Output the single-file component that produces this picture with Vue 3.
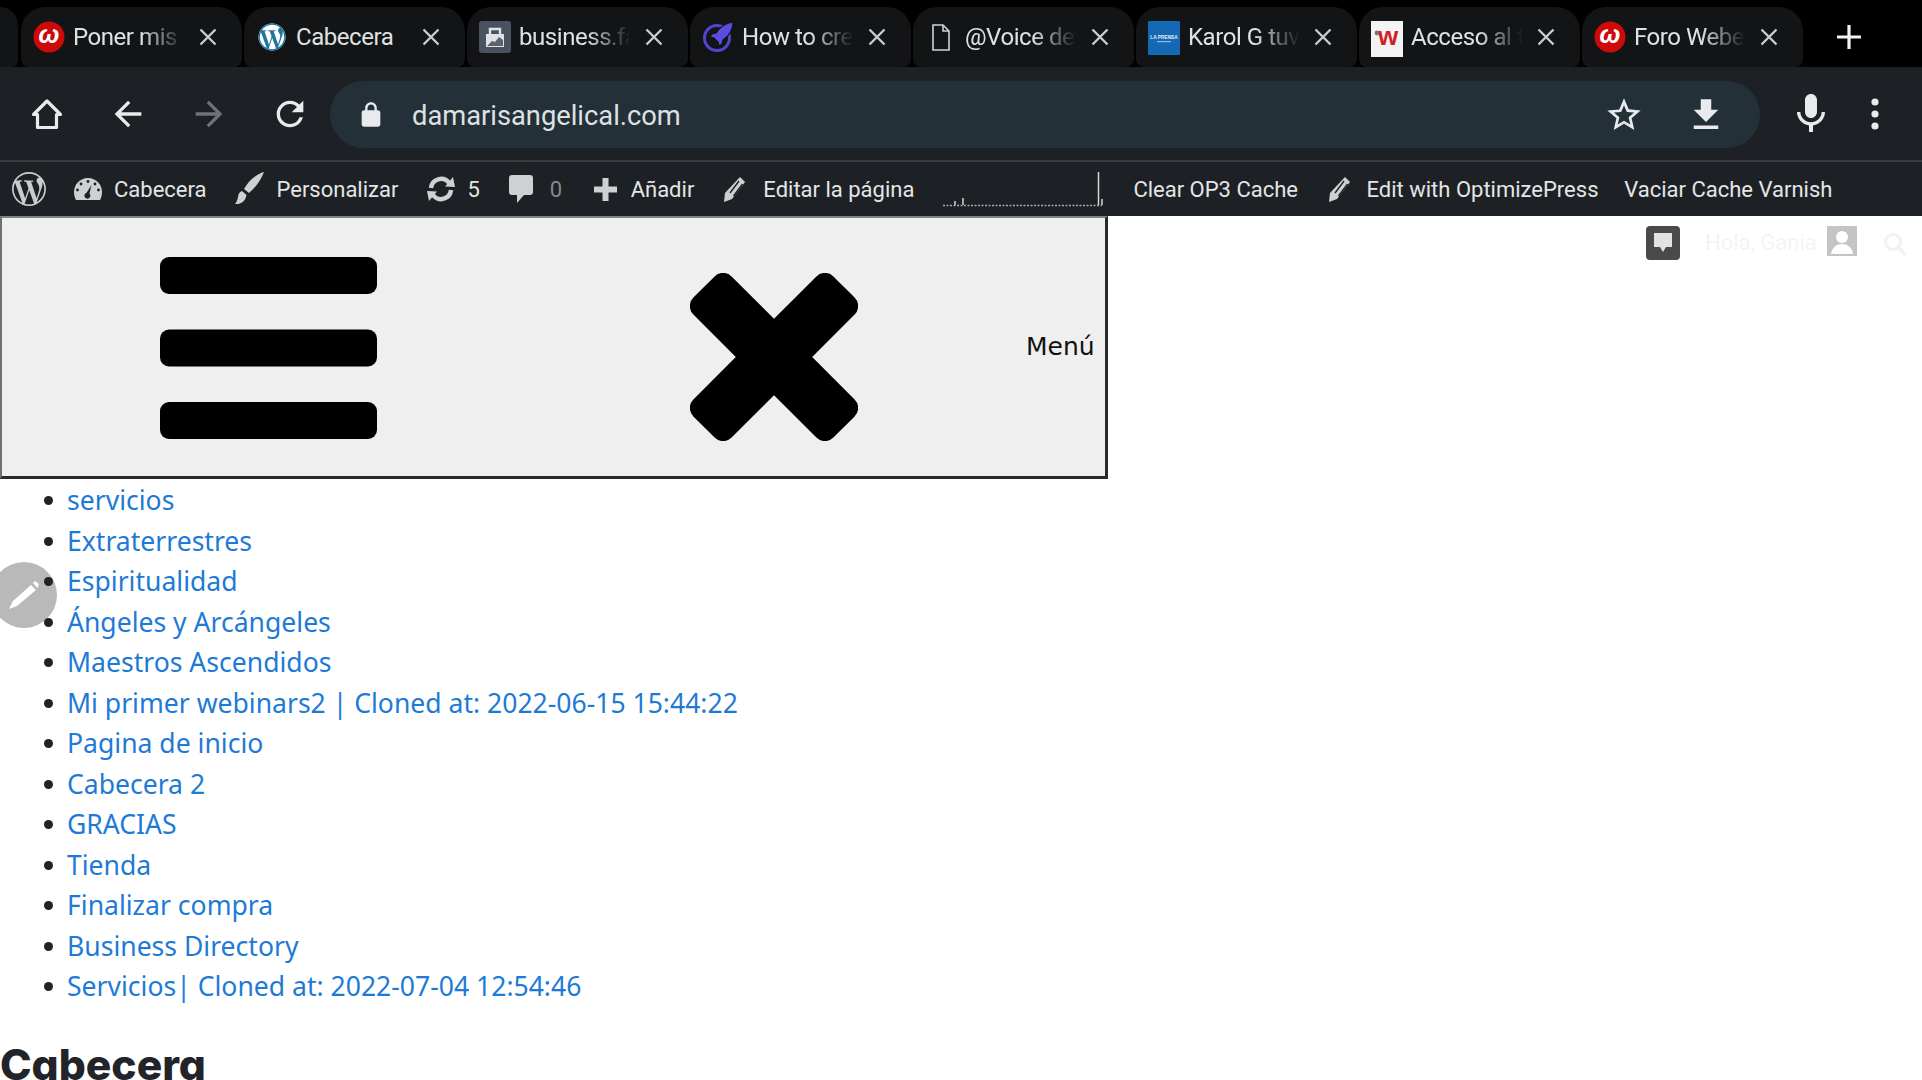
<script setup>
const wp = 'M21.469 6.825c.84 1.537 1.318 3.3 1.318 5.175 0 3.979-2.156 7.456-5.363 9.325l3.295-9.527c.615-1.54.82-2.771.82-3.864 0-.405-.026-.78-.07-1.11m-7.981.105c.647-.03 1.232-.105 1.232-.105.582-.075.514-.93-.067-.899 0 0-1.755.135-2.88.135-1.064 0-2.85-.15-2.85-.15-.585-.03-.661.855-.075.885 0 0 .54.061 1.125.09l1.68 4.605-2.37 7.08L5.354 6.9c.649-.03 1.234-.1 1.234-.1.585-.075.516-.93-.065-.896 0 0-1.746.138-2.874.138-.2 0-.438-.008-.69-.015C4.911 3.15 8.235 1.215 12 1.215c2.809 0 5.365 1.072 7.286 2.833-.046-.003-.091-.009-.141-.009-1.06 0-1.812.923-1.812 1.914 0 .89.513 1.643 1.06 2.531.411.72.89 1.643.89 2.977 0 .915-.354 1.994-.821 3.479l-1.075 3.585-3.9-11.61.001.014zM12 22.784c-1.059 0-2.081-.153-3.048-.437l3.237-9.406 3.315 9.087c.024.053.05.101.078.149-1.12.393-2.325.609-3.582.609M1.211 12c0-1.564.336-3.05.935-4.39L7.29 21.709C3.694 19.96 1.212 16.271 1.211 12M12 0C5.385 0 0 5.385 0 12s5.385 12 12 12 12-5.385 12-12S18.615 0 12 0'
const tabs = [
  { kind: 'w', title: 'Poner mis p' },
  { kind: 'wp', title: 'Cabecera' },
  { kind: 'bag', title: 'business.fa' },
  { kind: 'rocket', title: 'How to cre' },
  { kind: 'doc', title: '@Voice det' },
  { kind: 'prensa', title: 'Karol G tuv' },
  { kind: 'acceso', title: 'Acceso al f' },
  { kind: 'w', title: 'Foro Weber' },
]
const links = [
  'servicios', 'Extraterrestres', 'Espiritualidad', 'Ángeles y Arcángeles', 'Maestros Ascendidos',
  'Mi primer webinars2 | Cloned at: 2022-06-15 15:44:22', 'Pagina de inicio', 'Cabecera 2', 'GRACIAS',
  'Tienda', 'Finalizar compra', 'Business Directory', 'Servicios| Cloned at: 2022-07-04 12:54:46',
]
</script>

<template>
  <div class="screen">
    <div class="strip">
      <div class="tab stub"></div>
      <div v-for="t in tabs" :key="t.title" class="tab" :class="{ plain: t.title === 'Cabecera' }">
        <svg class="fav" viewBox="0 0 32 32">
          <template v-if="t.kind === 'w'">
            <circle cx="16" cy="16" r="15.5" fill="#cc0a0a" />
            <text x="16" y="22" text-anchor="middle" class="fav-w" fill="#fff">ω</text>
          </template>
          <template v-else-if="t.kind === 'wp'">
            <circle cx="16" cy="16" r="13.5" fill="#fff" />
            <path :d="wp" fill="#21759b" transform="translate(2.500 2.500) scale(1.125)" />
          </template>
          <template v-else-if="t.kind === 'bag'">
            <rect width="32" height="32" rx="3" fill="#4b525f" />
            <path d="M7 13h18v13H7z" fill="#dfe1e4" />
            <path d="M11 13V8h10v5" fill="none" stroke="#dfe1e4" stroke-width="2.400" />
            <path d="M8 25l5-5 3 1 4-5 4 3v6z" fill="#5c6270" />
          </template>
          <template v-else-if="t.kind === 'rocket'">
            <circle cx="15" cy="17" r="12.500" fill="none" stroke="#5145cf" stroke-width="3" />
            <path d="M31 1c-7 1-13 5-17 11l-4 1-2 3 4 1 4 4 1 4 3-2 1-4c6-4 10-11 10-18z" fill="#5a4ee0" stroke="#111315" stroke-width="1.200" />
          </template>
          <template v-else-if="t.kind === 'doc'">
            <path d="M8 4h10l6 6v19H8zM18 4v6h6" fill="none" stroke="#cfd1d3" stroke-width="1.600" />
          </template>
          <template v-else-if="t.kind === 'prensa'">
            <rect width="32" height="34" fill="#1569b4" />
            <text x="16" y="18" text-anchor="middle" class="fav-p" fill="#e6eff7">LA PRENSA</text>
            <rect x="9" y="20" width="14" height="1.200" fill="#8fbbe0" />
          </template>
          <template v-else>
            <rect width="32" height="36" fill="#f4f4f4" />
            <text x="17" y="24" text-anchor="middle" class="fav-a" fill="#d21f1f">w</text>
            <circle cx="6" cy="12" r="2.400" fill="#777" />
          </template>
        </svg>
        <span class="tab-title">{{ t.title }}</span>
        <svg class="tab-x" viewBox="0 0 18 18"><path d="M1.500 1.500l15 15M16.500 1.500l-15 15" stroke="#c9cbce" stroke-width="2.400" /></svg>
      </div>
      <svg class="newtab" viewBox="0 0 24 24"><path d="M12 0v24M0 12h24" stroke="#f1f3f4" stroke-width="3.200" /></svg>
    </div>

    <div class="toolbar">
      <button class="navbtn">
        <svg width="36" height="36" viewBox="0 0 36 36"><path d="M18 5L4.500 18.500H8.500V31.500H27.500V18.500H31.500Z" fill="none" stroke="#e8eaed" stroke-width="3.200" stroke-linejoin="round" /></svg>
      </button>
      <button class="navbtn">
        <svg width="40" height="40" viewBox="0 0 24 24"><path fill="#e8eaed" d="M20 11H7.830l5.590-5.590L12 4l-8 8 8 8 1.410-1.410L7.830 13H20v-2z" /></svg>
      </button>
      <button class="navbtn">
        <svg width="40" height="40" viewBox="0 0 24 24"><path fill="#6f7276" d="M4 11h12.170l-5.590-5.590L12 4l8 8-8 8-1.410-1.410L16.170 13H4v-2z" /></svg>
      </button>
      <button class="navbtn">
        <svg width="40" height="40" viewBox="0 0 24 24"><path fill="#e8eaed" d="M17.650 6.350A7.958 7.958 0 0 0 12 4c-4.420 0-7.990 3.580-7.990 8s3.570 8 7.990 8c3.730 0 6.840-2.550 7.730-6h-2.080A5.990 5.990 0 0 1 12 18c-3.310 0-6-2.690-6-6s2.690-6 6-6c1.660 0 3.140.690 4.220 1.780L13 11h7V4l-2.350 2.350z" /></svg>
      </button>
      <div class="urlbar">
        <svg class="lock" width="28" height="28" viewBox="0 0 24 24"><path fill="#e8eaed" d="M18 8h-1V6c0-2.760-2.240-5-5-5S7 3.240 7 6v2H6c-1.100 0-2 .9-2 2v10c0 1.100.9 2 2 2h12c1.100 0 2-.9 2-2V10c0-1.100-.9-2-2-2zM9 6c0-1.660 1.340-3 3-3s3 1.340 3 3v2H9V6z" /></svg>
        <span class="url">damarisangelical.com</span>
        <svg class="star" width="40" height="40" viewBox="0 0 24 24"><path fill="#e8eaed" d="M22 9.240l-7.190-.62L12 2 9.190 8.630 2 9.240l5.460 4.730L5.820 21 12 17.270 18.180 21l-1.630-7.030L22 9.240zM12 15.400l-3.760 2.270 1-4.280-3.320-2.880 4.380-.38L12 6.100l1.710 4.040 4.380.38-3.320 2.880 1 4.280L12 15.400z" /></svg>
        <svg class="down" width="42" height="42" viewBox="0 0 24 24"><path fill="#e8eaed" d="M19 9h-4V3H9v6H5l7 7 7-7zM5 18v2h14v-2H5z" /></svg>
      </div>
      <svg class="mic" width="48" height="48" viewBox="0 0 24 24"><path fill="#e8eaed" d="M12 14c1.660 0 2.990-1.340 2.990-3L15 5c0-1.660-1.340-3-3-3S9 3.340 9 5v6c0 1.660 1.340 3 3 3zm5.300-3c0 3-2.540 5.100-5.300 5.100S6.700 14 6.700 11H5c0 3.410 2.720 6.230 6 6.720V21h2v-3.280c3.280-.48 6-3.300 6-6.720h-1.700z" /></svg>
      <svg class="dots" width="8" height="32" viewBox="0 0 8 32"><circle cx="4" cy="4" r="3.600" fill="#e8eaed" /><circle cx="4" cy="16" r="3.600" fill="#e8eaed" /><circle cx="4" cy="28" r="3.600" fill="#e8eaed" /></svg>
    </div>

    <div class="adminbar">
      <svg class="a-ic" width="34" height="34" viewBox="0 0 24 24"><path :d="wp" fill="#c9cbcd" /></svg>
      <div class="a-item">
        <svg width="28" height="24" viewBox="0 0 28 24"><path d="M14 1C6 1 0 7.500 0 15c0 3.500 1 6.500 2 8h24c1-1.500 2-4.500 2-8C28 7.500 22 1 14 1z" fill="#cfd0d2" /><g fill="#1d2125"><circle cx="14" cy="4.500" r="1.400" /><circle cx="7" cy="7" r="1.400" /><circle cx="21" cy="7" r="1.400" /><circle cx="3.500" cy="13" r="1.400" /><circle cx="24.500" cy="13" r="1.400" /><path d="M17.500 8L15.500 16.500a3 3 0 1 1-3-.700z" /></g></svg>
        <span>Cabecera</span>
      </div>
      <div class="a-item">
        <svg width="29" height="34" viewBox="0 0 29 34"><path d="M29 0C22 2 14 8 9 17l5 4C21 15 26 8 29 0zM7 19c-3 1-3.500 3-4 6-.3 2.500-1.500 5-3 7 4 .5 10-1 11.500-9z" fill="#cfd0d2" /></svg>
        <span>Personalizar</span>
      </div>
      <div class="a-item a-updates">
        <svg width="30" height="26" viewBox="0 0 30 26"><g fill="none" stroke="#cfd0d2" stroke-width="4.500"><path d="M5 12A10 10 0 0 1 23 7" /><path d="M25 14A10 10 0 0 1 7 19" /></g><path d="M19 10.500L29 11 27 1zM11 15.500L1 15 3 25z" fill="#cfd0d2" /></svg>
        <span>5</span>
      </div>
      <div class="a-item a-comments">
        <svg width="24" height="28" viewBox="0 0 24 28"><path d="M3 0h18a3 3 0 0 1 3 3v14a3 3 0 0 1-3 3h-6l-7 8v-8H3a3 3 0 0 1-3-3V3a3 3 0 0 1 3-3z" fill="#cfd0d2" /></svg>
        <span class="muted">0</span>
      </div>
      <div class="a-item a-new">
        <svg width="23" height="23" viewBox="0 0 23 23"><path d="M11.500 0v23M0 11.500h23" stroke="#cfd0d2" stroke-width="6" /></svg>
        <span>Añadir</span>
      </div>
      <div class="a-item a-edit">
        <svg width="23" height="26" viewBox="0 0 23 26"><path d="M17 1l5 5-13 17-8 3 1-9z" fill="#cfd0d2" /><path d="M7 17l9-12M10.500 20l9-12" stroke="#1d2125" stroke-width="1.400" /></svg>
        <span>Editar la página</span>
      </div>
      <svg class="spark" width="160" height="40" viewBox="0 0 160 40">
        <path d="M0 36.500H159" stroke="#a8aaac" stroke-width="1.500" stroke-dasharray="2 1.500" />
        <path d="M12 36v-4M20 36v-7M155.500 36V3M159 36v-6" stroke="#d5d6d8" stroke-width="1.500" />
      </svg>
      <div class="a-item a-clear"><span>Clear OP3 Cache</span></div>
      <div class="a-item a-op">
        <svg width="23" height="26" viewBox="0 0 23 26"><path d="M17 1l5 5-13 17-8 3 1-9z" fill="#cfd0d2" /><path d="M7 17l9-12M10.500 20l9-12" stroke="#1d2125" stroke-width="1.400" /></svg>
        <span>Edit with OptimizePress</span>
      </div>
      <div class="a-item a-varnish"><span>Vaciar Cache Varnish</span></div>
    </div>

    <main class="page">
      <div class="menu-toggle">
        <svg class="bars" width="217" height="182" viewBox="0 0 217 182">
          <rect width="217" height="37" rx="9" />
          <rect y="72.500" width="217" height="37" rx="9" />
          <rect y="145" width="217" height="37" rx="9" />
        </svg>
        <svg class="cross" width="168" height="168" viewBox="0 0 168 168">
          <rect x="-15" y="57" width="198" height="54" rx="12" transform="rotate(45 84 84)" />
          <rect x="-15" y="57" width="198" height="54" rx="12" transform="rotate(-45 84 84)" />
        </svg>
        <span class="menu-label">Menú</span>
      </div>

      <ul class="links">
        <li v-for="l in links" :key="l"><a>{{ l }}</a></li>
      </ul>
      <h1 class="title">Cabecera</h1>

      <div class="user-tools">
        <span class="chat">
          <svg width="20" height="22" viewBox="0 0 20 22"><path d="M1 1h18v14h-6l-3 5-3-5H1z" fill="#e2e2e2" /></svg>
        </span>
        <span class="hola">Hola, Gania</span>
        <span class="avatar">
          <svg width="30" height="30" viewBox="0 0 30 30"><rect width="30" height="30" fill="#c4c4c4" /><circle cx="15" cy="11" r="6" fill="#fff" /><path d="M4 28c1-7 6-10 11-10s10 3 11 10z" fill="#fff" /></svg>
        </span>
        <svg class="search" width="24" height="24" viewBox="0 0 24 24"><circle cx="10" cy="10" r="7.500" fill="none" stroke="#f2f2f2" stroke-width="3" /><path d="M15.500 15.500L23 23" stroke="#f2f2f2" stroke-width="3.500" /></svg>
      </div>

      <div class="fab">
        <svg width="30" height="28" viewBox="0 0 30 28"><path d="M0 28l4-8L22 4l5 5L8 25zM24 2l2-2 4 3-1.500 4z" fill="#fff" /></svg>
      </div>
    </main>
  </div>
</template>

<style>
html, body { margin: 0; background: #fff; overflow: hidden; }
</style>

<style scoped>
.screen { width: 1922px; height: 1080px; overflow: hidden; display: flex; flex-direction: column; font-family: Roboto, sans-serif; }

.strip { height: 67px; flex: none; background: #000; padding-top: 7px; box-sizing: border-box; display: flex; }
.tab { width: 221px; margin-right: 2px; flex: none; background: #121416; border-radius: 24px 24px 8px 8px; display: flex; align-items: center; padding: 0 0 0 12px; box-sizing: border-box; }
.tab.stub { width: 18px; margin-right: 3px; border-radius: 0 24px 8px 0; padding: 0; }
.fav { width: 32px; height: 32px; flex: none; overflow: visible; }
.fav-w { font: italic 700 25px "Liberation Sans", sans-serif; }
.fav-a { font: 900 26px "Liberation Sans", sans-serif; }
.fav-p { font: 700 4.800px "Liberation Sans", sans-serif; }
.tab-title { margin-left: 8px; margin-right: -14px; width: 130px; flex: none; white-space: nowrap; font-size: 24px; letter-spacing: -.45px; color: #dfe1e3; -webkit-mask-image: linear-gradient(90deg, #000 52%, transparent 86%); mask-image: linear-gradient(90deg, #000 52%, transparent 86%); }
.tab.plain .tab-title { -webkit-mask-image: none; mask-image: none; }
.tab-x { width: 18px; height: 18px; margin-left: 10px; flex: none; }
.newtab { width: 24px; height: 24px; margin: 18px 0 0 32px; flex: none; }

.toolbar { height: 95px; flex: none; background: #1d2125; display: flex; align-items: center; padding-left: 6px; box-sizing: border-box; border-bottom: 2px solid #3a3d40; }
.navbtn { width: 81px; height: 60px; flex: none; padding: 0; border: 0; background: none; display: flex; align-items: center; justify-content: center; }
.urlbar { width: 1430px; height: 67px; flex: none; margin-top: 2px; border-radius: 34px; background: #233038; display: flex; align-items: center; padding-left: 27px; box-sizing: border-box; }
.lock { flex: none; }
.url { margin-left: 27px; font-size: 27.300px; color: #dfe1e3; flex: 1; padding-top: 2px; }
.star { flex: none; margin-right: 41px; }
.down { flex: none; margin-right: 33px; }
.mic { margin-left: 27px; flex: none; }
.dots { margin-left: 36px; flex: none; }

.adminbar { height: 54px; flex: none; background: #1d2125; display: flex; align-items: center; padding-left: 12px; gap: 29px; box-sizing: border-box; font-size: 22px; color: #e4e5e6; white-space: nowrap; }
.a-ic { flex: none; margin-right: -1px; }
.a-item { display: flex; align-items: center; gap: 12px; }
.a-updates { margin-left: -1px; gap: 11px; }
.a-comments { gap: 17px; }
.a-new { margin-left: 2.500px; gap: 14px; }
.a-edit { gap: 17px; }
.a-clear { margin-left: 1px; }
.a-op { margin-left: 1px; gap: 15.500px; }
.a-varnish { margin-left: -3.300px; }
.muted { color: #85888b; }
.spark { flex: none; }

.page { position: relative; flex: 1; background: #fff; min-height: 0; overflow: hidden; }
.menu-toggle { width: 1108px; height: 263px; box-sizing: border-box; background: #efefef; border-style: solid; border-width: 2px 3px 3px 2px; border-color: #808080 #2a2a2a #2a2a2a #707070; display: flex; align-items: center; padding-left: 158px; }
.bars { flex: none; margin-top: 2px; }
.cross { flex: none; margin-left: 313px; margin-top: 19px; }
.menu-label { margin-left: 168px; margin-bottom: 2px; font: 25px "DejaVu Sans", sans-serif; color: #111; }

.links { position: relative; z-index: 1; margin: 1px 0 0; padding: 0 0 0 67px; list-style: none; font: 26.550px/40.500px "Noto Sans", sans-serif; color: #222; }
.links li { position: relative; }
.links li::before { content: ""; position: absolute; left: -23px; top: 16px; width: 9px; height: 9px; border-radius: 50%; background: #222; }
.links a { color: #1e7ad6; }
.title { margin: 28px 0 0; font: 800 42.500px/60px Inter, sans-serif; font-feature-settings: "cv11"; color: #22242a; }

.user-tools { position: absolute; top: 10px; left: 1646px; display: flex; align-items: flex-start; }
.chat { width: 34px; height: 34px; border-radius: 4px; background: #4a4a4a; display: flex; align-items: center; justify-content: center; }
.hola { margin-left: 25px; font-size: 22px; line-height: 34px; color: #f4f4f4; }
.avatar { margin-left: 10px; width: 30px; height: 30px; display: block; }
.search { margin-left: 26px; margin-top: 6px; }

.fab { position: absolute; left: -9px; top: 346px; width: 66px; height: 66px; border-radius: 50%; background: #b9b9b9; display: flex; align-items: center; justify-content: center; }
</style>
